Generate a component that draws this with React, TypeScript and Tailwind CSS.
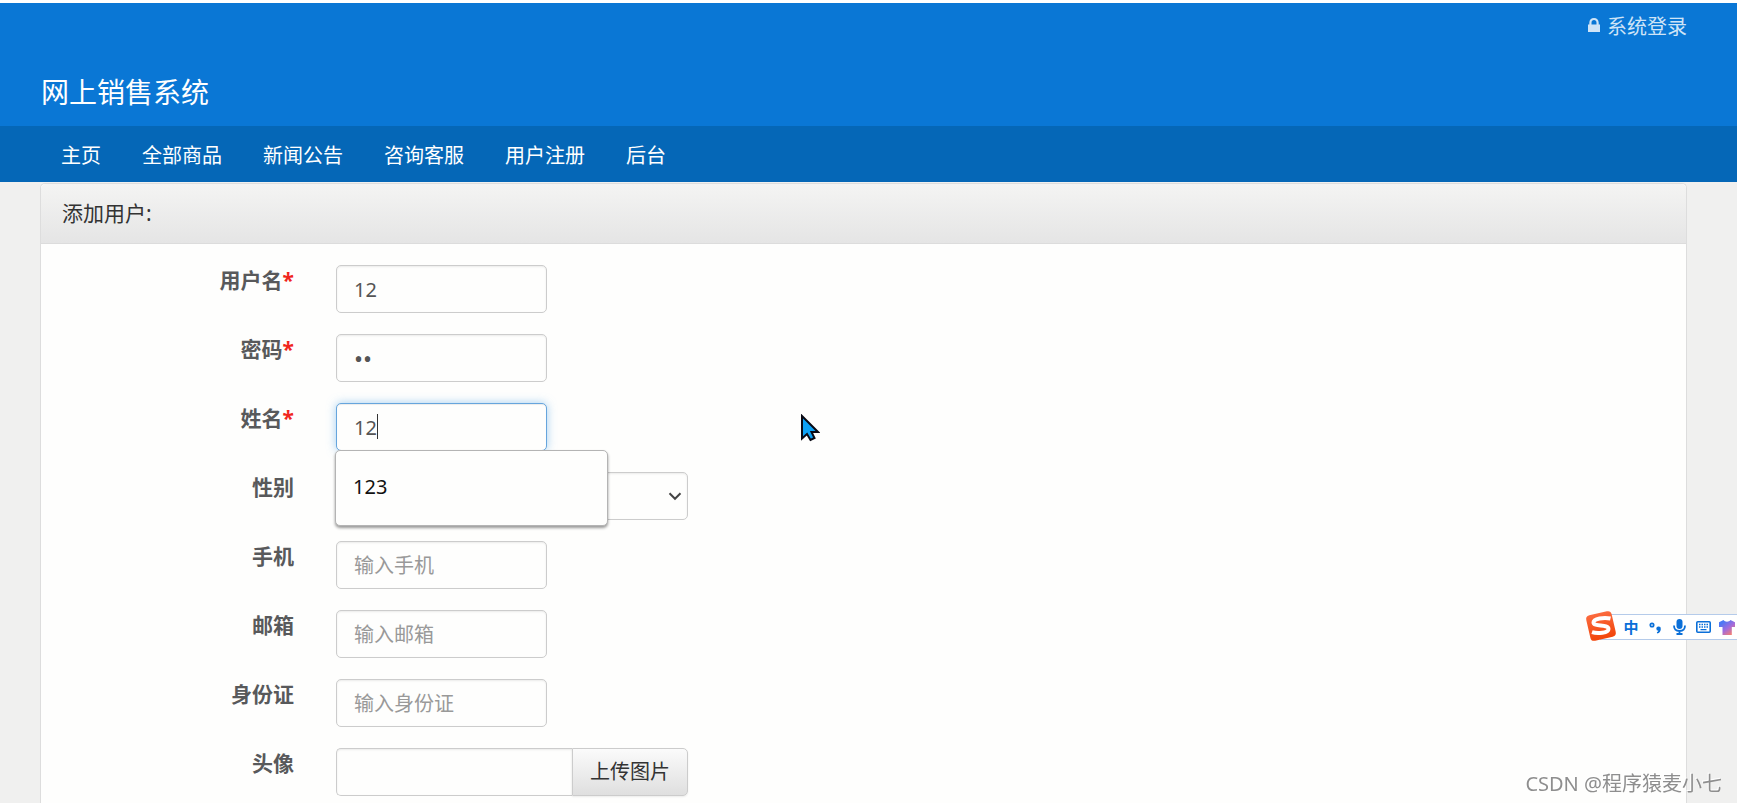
import React, { useState } from 'react';

interface Field {
  id: string;
  label: string;
  required?: boolean;
  type?: string;
  value?: string;
  placeholder?: string;
}

const NAV = ['主页', '全部商品', '新闻公告', '咨询客服', '用户注册', '后台'];

const INPUT =
  'h-12 rounded-[5px] border border-[#cccccc] bg-[#fefefd] px-[17px] text-[#555555] placeholder:text-[#999999] shadow-[inset_0_1px_2px_rgba(0,0,0,0.08)] outline-none';

const Header = () => (
  <header className="border-t-[3px] border-white bg-[#0a77d5] px-[41px] text-white">
    <div className="flex h-12 items-center justify-end">
      <a href="#login" className="mr-[9px] flex items-center gap-[7px] text-[20px] leading-[30px] text-[#cfe4f7]">
        <svg width="12" height="14" viewBox="0 0 12 14" fill="currentColor" className="-mt-1" aria-hidden="true">
          <path d="M0 6.6h1.3V4.7C1.300 2 3.300 0 6 0s4.700 2 4.700 4.700v1.900H12V14H0zM3.500 6.600h5V4.700C8.500 3.200 7.500 2.100 6 2.100S3.500 3.200 3.500 4.700z" />
        </svg>
        系统登录
      </a>
    </div>
    <h1 className="pt-[21px] pb-[14px] text-[28px] leading-[40px]">网上销售系统</h1>
  </header>
);

const Nav = () => (
  <nav className="flex h-14 items-center gap-px bg-[#0567b7] px-[41px] pt-[3px] text-white">
    {NAV.map((name) => (
      <a key={name} href="#" className="px-5 text-[20px] leading-[30px]">
        {name}
      </a>
    ))}
  </nav>
);

const Row = ({ id, label, required, children }: { id: string; label: string; required?: boolean; children: React.ReactNode }) => (
  <div className="mb-[21px] flex items-start gap-[42px] last:mb-0">
    <label htmlFor={id} className="w-[252px] shrink-0 text-right text-[21px] leading-[30px] font-bold text-[#58595b]">
      {label}
      {required && <span className="text-[#f0251c]">*</span>}
    </label>
    {children}
  </div>
);

const TextField = ({ field }: { field: Field }) => {
  const [value, setValue] = useState(field.value ?? '');
  return (
    <Row id={field.id} label={field.label} required={field.required}>
      <input
        id={field.id}
        type={field.type ?? 'text'}
        value={value}
        placeholder={field.placeholder}
        onChange={(e) => setValue(e.target.value)}
        className={`${INPUT} w-[211px] ${field.type === 'password' ? 'text-[24px]' : 'text-[20px]'}`}
      />
    </Row>
  );
};

// Name field in its focused state, with the autocomplete list open
const NameField = () => {
  const [value, setValue] = useState('12');
  return (
    <Row id="name" label="姓名" required>
      <div className="relative">
        <input
          id="name"
          value={value}
          onChange={(e) => setValue(e.target.value)}
          className="h-12 w-[211px] rounded-[5px] border border-[#66a5dd] bg-[#fefefd] px-[17px] text-[20px] text-[#555555] caret-transparent shadow-[inset_0_1px_1px_rgba(0,0,0,0.075),0_0_10px_rgba(102,175,233,0.6)] outline-none"
        />
        <span className="absolute top-[11px] left-[41px] h-[25px] w-px bg-[#333333]" />
        <ul className="absolute top-[47px] -left-px z-10 h-[76px] w-[273px] rounded-[5px] border border-[#b4b4b4] bg-[#fefefd] px-[17px] pt-[21px] shadow-[0_2px_3px_rgba(0,0,0,0.4)]">
          <li className="text-[20px] leading-[30px] text-[#111111]">123</li>
        </ul>
      </div>
    </Row>
  );
};

const SexField = () => (
  <Row id="sex" label="性别">
    <div className="relative">
      <select id="sex" className={`${INPUT} w-[352px] appearance-none text-[20px]`}>
        <option>男</option>
        <option>女</option>
      </select>
      <svg width="14" height="9" viewBox="0 0 14 9" fill="none" className="pointer-events-none absolute top-5 right-1.5" aria-hidden="true">
        <path d="M1.500 1.300 7 6.800l5.500-5.500" stroke="#444444" strokeWidth="2" />
      </svg>
    </div>
  </Row>
);

const AvatarField = () => (
  <Row id="avatar" label="头像">
    <div className="flex">
      <input id="avatar" className={`${INPUT} w-[236px] rounded-r-none border-r-0 text-[20px]`} />
      <button
        type="button"
        className="h-12 w-[116px] rounded-r-[5px] border border-[#cccccc] bg-linear-to-b from-[#fbfbfb] to-[#dfdfdf] text-[20px] text-[#333333] shadow-[0_1px_2px_rgba(0,0,0,0.08)]"
      >
        上传图片
      </button>
    </div>
  </Row>
);

const ImeBar = () => (
  <div className="fixed top-[611px] right-0 flex h-8 items-center">
    <div className="flex h-[26px] items-center border-y border-[#b5cbea] bg-white pl-[19px] text-[#0a6fd8]">
      <button type="button" className="w-6 text-[15px] leading-6 font-bold" aria-label="中文">
        中
      </button>
      <button type="button" className="flex w-6 justify-center" aria-label="标点">
        <svg width="13" height="13" viewBox="0 0 13 13">
          <circle cx="3" cy="4" r="1.700" fill="none" stroke="currentColor" strokeWidth="1.700" />
          <path d="M9.500 5.500a2.200 2.200 0 0 1 2.300 2.400c0 2.300-1.400 3.900-3.500 4.600l-.5-1.200c1-.4 1.500-.9 1.600-1.500A2.100 2.100 0 0 1 9.500 5.500z" fill="currentColor" />
        </svg>
      </button>
      <button type="button" className="flex w-6 justify-center" aria-label="语音">
        <svg width="13" height="16" viewBox="0 0 13 16">
          <rect x="3.500" width="6" height="10" rx="3" fill="currentColor" />
          <path d="M1 6.500c0 3.500 2 5.500 5.500 5.500S12 10 12 6.500M6.500 12v3M3.500 15h6" fill="none" stroke="currentColor" strokeWidth="1.800" />
        </svg>
      </button>
      <button type="button" className="flex w-6 justify-center" aria-label="键盘">
        <svg width="15" height="12" viewBox="0 0 15 12">
          <rect x=".8" y=".8" width="13.400" height="10.400" rx="1" fill="none" stroke="currentColor" strokeWidth="1.600" />
          <path
            d="M3 2.800h1.500v1.500H3zM5.500 2.800H7v1.500H5.500zM8 2.800h1.500v1.500H8zM10.500 2.800H12v1.500h-1.500zM3 5.300h1.500v1.500H3zM5.500 5.300H7v1.500H5.500zM8 5.300h1.500v1.500H8zM10.500 5.300H12v1.500h-1.500zM4.500 7.900h6v1.400h-6z"
            fill="currentColor"
          />
        </svg>
      </button>
      <button type="button" className="flex w-[22px] pl-1" aria-label="皮肤">
        <svg width="16" height="15" viewBox="0 0 16 15" className="shrink-0">
          <defs>
            <linearGradient id="shirt" x1="0" y1="0" x2=".8" y2="1">
              <stop offset=".2" stopColor="#4b78f5" />
              <stop offset=".6" stopColor="#a36bdc" />
              <stop offset="1" stopColor="#fb8068" />
            </linearGradient>
          </defs>
          <path d="M4.500 0C6 2.200 10 2.200 11.500 0L16 2.200V7h-3.200v8H3.500V7H0V2.200z" fill="url(#shirt)" />
        </svg>
      </button>
    </div>
    <svg width="34" height="34" viewBox="0 0 34 34" className="absolute -top-0.5 -left-4" aria-hidden="true">
      <defs>
        <linearGradient id="sogou" x1="0" y1="0" x2="0" y2="1">
          <stop offset="0" stopColor="#fb6a3e" />
          <stop offset="1" stopColor="#f2450a" />
        </linearGradient>
      </defs>
      <rect x="4" y="4" width="26" height="26" rx="4" fill="url(#sogou)" transform="rotate(-13 17 17)" />
      <path d="M26.500 9.500C20 8 9.500 9.500 9.500 13.500c0 4.500 15 1.500 15 6.500 0 4-11 5-16.500 3.200" fill="none" stroke="white" strokeWidth="4" />
    </svg>
  </div>
);

const Cursor = () => (
  <svg width="20" height="28" viewBox="0 0 20 28" className="fixed top-[414px] left-[800px]" aria-hidden="true">
    <path d="M2 2v22.500l5-4.500 3.500 6 4-2-3-6H18z" fill="#0ea2f5" stroke="#0a0a14" strokeWidth="2" />
  </svg>
);

export default function App() {
  return (
    <div className="flex min-h-screen flex-col bg-[#f0f0ef] font-['Noto_Sans','Noto_Sans_CJK_SC',sans-serif]">
      <Header />
      <Nav />
      <main className="mt-px mr-[50px] ml-10 flex grow flex-col rounded-t-[5px] border border-b-0 border-[#dddddd] bg-[#fefefd]">
        <h2 className="h-[60px] rounded-t-[5px] border-b border-[#dcdcdc] bg-linear-to-b from-[#f4f4f3] to-[#e5e5e5] px-[21px] pt-[14px] text-[21px] leading-[30px] text-[#333333]">
          添加用户:
        </h2>
        <form className="pt-[21px] pb-[6px] pl-px">
          <TextField field={{ id: 'username', label: '用户名', required: true, value: '12' }} />
          <TextField field={{ id: 'password', label: '密码', required: true, type: 'password', value: '12' }} />
          <NameField />
          <SexField />
          <TextField field={{ id: 'phone', label: '手机', placeholder: '输入手机' }} />
          <TextField field={{ id: 'email', label: '邮箱', placeholder: '输入邮箱' }} />
          <TextField field={{ id: 'idcard', label: '身份证', placeholder: '输入身份证' }} />
          <AvatarField />
        </form>
      </main>
      <Cursor />
      <ImeBar />
      <p className="fixed right-[15px] bottom-1 text-[20px] leading-[30px] text-[#8e8e8e] [text-shadow:-1px_-1px_0_#ffffff]">
        CSDN @程序猿麦小七
      </p>
    </div>
  );
}
